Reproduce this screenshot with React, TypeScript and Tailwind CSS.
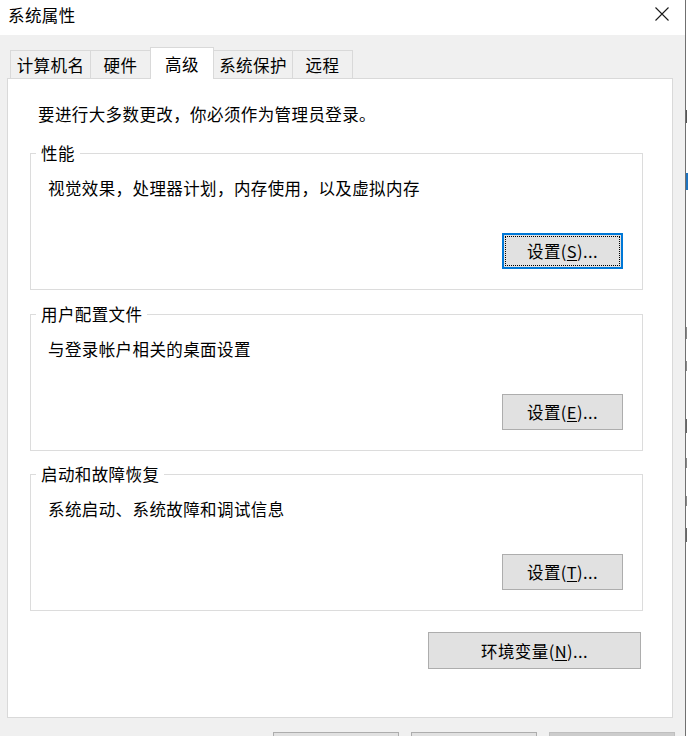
import type { ReactNode } from 'react'

const tabs = [
  { label: '计算机名', width: 'w-[81px]' },
  { label: '硬件', width: 'w-[61px]' },
  { label: '高级', width: 'w-[64px]', active: true },
  { label: '系统保护', width: 'w-[80px]' },
  { label: '远程', width: 'w-[61px]' },
]

const groups = [
  { title: '性能', text: '视觉效果，处理器计划，内存使用，以及虚拟内存', key: 'S', focused: true, gap: 'mt-[18px]' },
  { title: '用户配置文件', text: '与登录帐户相关的桌面设置', key: 'E', gap: 'mt-[14px]' },
  { title: '启动和故障恢复', text: '系统启动、系统故障和调试信息', key: 'T', gap: 'mt-[13px]' },
]

function WinButton({ children, focused, className }: { children?: ReactNode; focused?: boolean; className: string }) {
  if (focused) {
    return (
      <button className={`flex items-center justify-center border-2 border-[#0078d7] bg-[#e1e1e1] text-[16.5px] leading-[22px] tracking-[0.4px] text-black outline-1 outline-dotted outline-black outline-offset-[-4px] ${className}`}>
        {children}
      </button>
    )
  }
  return (
    <button className={`flex items-center justify-center border border-[#adadad] bg-[#e1e1e1] text-[16.5px] leading-[22px] tracking-[0.4px] text-black ${className}`}>
      {children}
    </button>
  )
}

export default function App() {
  return (
    <div className="flex h-[736px] w-[688px] overflow-hidden bg-white font-['Microsoft_YaHei_UI','Noto_Sans_CJK_SC',sans-serif] text-black">
      <div className="flex w-[685px] shrink-0 flex-col">
        {/* title bar */}
        <div className="flex h-[35px] shrink-0 items-start justify-between bg-white pl-[8px] pr-[16px]">
          <span className="pt-[4px] text-[16.5px] leading-[22px] tracking-[0.4px]">系统属性</span>
          <svg viewBox="0 0 14 14" className="mt-[7px] h-[14px] w-[14px]" fill="none" stroke="#1a1a1a" strokeWidth="1.1">
            <path d="M0.5 0.5 13.5 13.5M13.5 0.5 0.5 13.5" />
          </svg>
        </div>

        {/* body */}
        <div className="flex flex-1 flex-col bg-[#f0f0f0] pl-[7px] pr-[12px] pt-[12px]">
          <div className="flex h-[31px] items-end pl-[3px]">
            {tabs.map((tab, i) =>
              tab.active ? (
                <div
                  key={tab.label}
                  className={`relative z-10 -mb-px -ml-px flex h-[32px] items-center justify-center border border-b-0 border-[#d9d9d9] bg-white text-[16.5px] leading-[22px] tracking-[0.4px] ${tab.width}`}
                >
                  {tab.label}
                </div>
              ) : (
                <div
                  key={tab.label}
                  className={`flex h-[28px] items-center justify-center border border-b-0 border-[#d9d9d9] bg-[#f0f0f0] text-[16.5px] leading-[22px] tracking-[0.4px] ${i > 0 ? '-ml-px' : ''} ${tab.width}`}
                >
                  {tab.label}
                </div>
              ),
            )}
          </div>

          <div className="flex h-[640px] w-[666px] shrink-0 flex-col border border-[#d9d9d9] bg-white">
            <p className="ml-[30px] mt-[24px] text-[16.5px] leading-[22px] tracking-[0.4px]">
              要进行大多数更改，你必须作为管理员登录。
            </p>

            {groups.map((g) => (
              <fieldset key={g.title} className={`ml-[22px] w-[613px] border border-[#dcdcdc] ${g.gap}`}>
                <legend className="ml-[5px] px-[5px] text-[16.5px] leading-[20px] tracking-[0.4px]">{g.title}</legend>
                <div className="flex flex-col pb-[20px] pl-[17px]">
                  <p className="mt-[14px] text-[16.5px] leading-[22px] tracking-[0.4px]">{g.text}</p>
                  <div className="mt-[34px] flex justify-end pr-[19px]">
                    <WinButton focused={g.focused} className="h-[36px] w-[121px]">
                      设置(<span className="underline underline-offset-2">{g.key}</span>)...
                    </WinButton>
                  </div>
                </div>
              </fieldset>
            ))}

            <div className="ml-[22px] mt-[21px] flex w-[613px] justify-end pr-[2px]">
              <WinButton className="h-[37px] w-[213px]">
                环境变量(<span className="underline underline-offset-2">N</span>)...
              </WinButton>
            </div>
          </div>

          {/* OK / Cancel / Apply, only their top edges fall inside the picture */}
          <div className="mt-[14px] flex justify-end gap-[12px]">
            <WinButton className="h-[30px] w-[126px] shrink-0" />
            <WinButton className="h-[30px] w-[126px] shrink-0" />
            <div className="-mr-[2px] h-[30px] w-[126px] shrink-0 border border-[#bfbfbf] bg-[#cccccc]" />
          </div>
        </div>
      </div>

      {/* window edge and the window behind */}
      <div className="w-px shrink-0 bg-[#707070]" />
      <div className="flex flex-1 flex-col bg-white">
        <div className="mt-[110px] h-[13px] w-[1px] bg-[#555555]" />
        <div className="mt-[50px] h-[17px] w-full bg-[#1e73be]" />
        <div className="mt-[137px] h-[12px] w-[1px] bg-[#888888]" />
        <div className="mt-[22px] h-[10px] w-[1px] bg-[#888888]" />
        <div className="mt-[48px] h-[14px] w-[1px] bg-[#666666]" />
        <div className="mt-[25px] h-[10px] w-[1px] bg-[#888888]" />
        <div className="mt-[28px] h-[10px] w-[1px] bg-[#888888]" />
        <div className="mt-[22px] h-[14px] w-[1px] bg-[#666666]" />
      </div>
    </div>
  )
}
